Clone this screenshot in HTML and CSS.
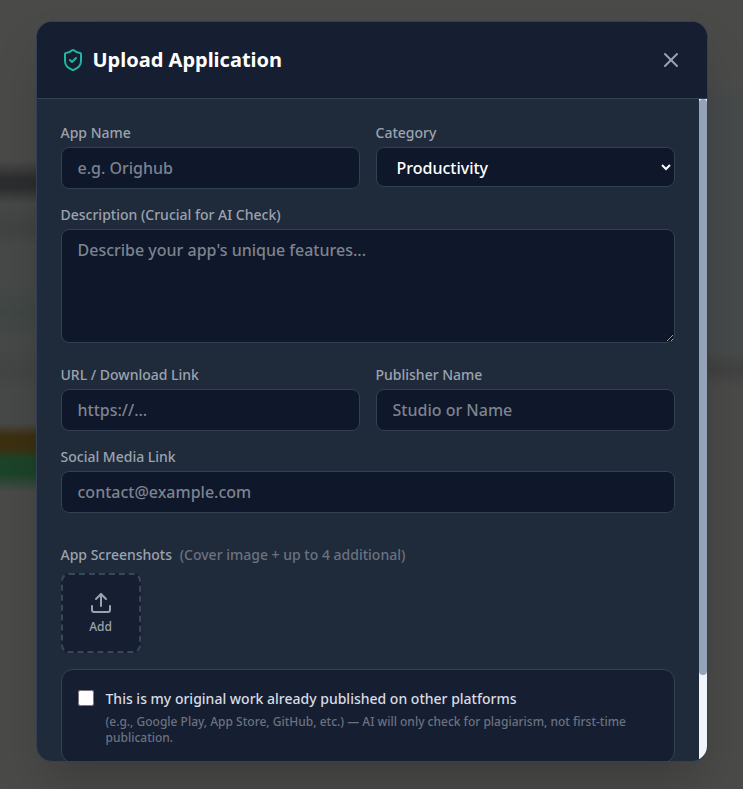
FILE: index.html
```html
<!DOCTYPE html>
<html lang="en">
<head>
  <meta charset="UTF-8" />
  <meta name="viewport" content="width=device-width, initial-scale=1.0"/>
  <title>Upload Application</title>
  <link rel="stylesheet" href="styles.css">
</head>
<body>

  <div class="overlay">
    <div class="modal" role="dialog" aria-labelledby="modal-title">

      <!-- Header -->
      <div class="modal-header">
        <h2 id="modal-title">
          <svg class="shield" viewBox="0 0 24 24" fill="none" stroke="currentColor" stroke-width="2" stroke-linecap="round" stroke-linejoin="round">
            <path d="M20 13c0 5-3.5 7.5-7.66 8.95a1 1 0 0 1-.67-.01C7.5 20.5 4 18 4 13V6a1 1 0 0 1 1-1c2 0 4.5-1.2 6.24-2.72a1.17 1.17 0 0 1 1.52 0C14.51 3.81 17 5 19 5a1 1 0 0 1 1 1z"/>
            <path d="m9 12 2 2 4-4"/>
          </svg>
          Upload Application
        </h2>
        <button type="button" class="close-btn" aria-label="Close">
          <svg viewBox="0 0 24 24" fill="none" stroke="currentColor" stroke-width="2" stroke-linecap="round" stroke-linejoin="round">
            <path d="M18 6 6 18"/>
            <path d="m6 6 12 12"/>
          </svg>
        </button>
      </div>

      <!-- Form -->
      <div class="modal-body">
        <form class="upload-form" novalidate>
          <div class="form-row">
            <div class="form-group">
              <label for="app-name">App Name</label>
              <input type="text" id="app-name" placeholder="e.g. Orighub">
            </div>
            <div class="form-group">
              <label for="category">Category</label>
              <select id="category">
                <option>Productivity</option>
              </select>
            </div>
          </div>

          <div class="form-group">
            <label for="description">Description (Crucial for AI Check)</label>
            <textarea id="description" rows="4" placeholder="Describe your app's unique features..."></textarea>
          </div>

          <div class="form-row">
            <div class="form-group">
              <label for="app-url">URL / Download Link</label>
              <input type="url" id="app-url" placeholder="https://...">
            </div>
            <div class="form-group">
              <label for="publisher">Publisher Name</label>
              <input type="text" id="publisher" placeholder="Studio or Name">
            </div>
          </div>

          <div class="form-group">
            <label for="social">Social Media Link</label>
            <input type="text" id="social" placeholder="contact@example.com">
          </div>

          <div class="screenshots">
            <p class="screenshots-label">App Screenshots <span>(Cover image + up to 4 additional)</span></p>
            <button type="button" class="add-btn">
              <svg viewBox="0 0 24 24" fill="none" stroke="currentColor" stroke-width="2" stroke-linecap="round" stroke-linejoin="round">
                <path d="M21 15v4a2 2 0 0 1-2 2H5a2 2 0 0 1-2-2v-4"/>
                <path d="m17 8-5-5-5 5"/>
                <path d="M12 3v12"/>
              </svg>
              Add
            </button>
          </div>

          <div class="original-card">
            <input type="checkbox" id="original">
            <label for="original">
              This is my original work already published on other platforms
              <small>(e.g., Google Play, App Store, GitHub, etc.) — AI will only check for plagiarism, not first-time publication.</small>
            </label>
          </div>
        </form>
        <div class="scrollbar" aria-hidden="true">
          <div class="scrollbar-thumb"></div>
        </div>
      </div>

    </div>
  </div>

</body>
</html>
```
FILE: styles.css
```css
* {
  box-sizing: border-box;
  margin: 0;
  padding: 0;
}

body {
  font-family: 'Segoe UI', 'Noto Sans', sans-serif;
  font-weight: 500;
  color: #fff;
  background: #4a4b49;
}

/* Dimmed page behind the dialog */
.overlay {
  display: flex;
  justify-content: center;
  align-items: flex-start;
  height: 100vh;
  padding: 21px 16px 27px;
  background:
    linear-gradient(to bottom, #4a4b49 160px, #2c2d2e 179px, #2c2d2e 187px, #474948 204px, #414343 230px, #474948 246px, #474948 285px, #3f4745 312px, #474948 345px, #424543 372px, #474948 390px, #474948 423px, #3d3011 436px, #3d3011 448px, #1c4429 460px, #1c4429 474px, #4a4a49 492px) left / 50% 100% no-repeat,
    linear-gradient(to bottom, #4a4b49 80px, #474a4a 100px, #474a4a 352px, #404140 370px, #4a4a49 388px);
}

/* Modal */
.modal {
  display: flex;
  flex-direction: column;
  width: 100%;
  max-width: 672px;
  max-height: 100%;
  overflow: hidden;
  background: #1f2a3b;
  border: 1px solid #334155;
  border-radius: 16px;
  box-shadow: 0 25px 50px -12px rgba(0, 0, 0, 0.25);
}

.modal-header {
  display: flex;
  flex: none;
  justify-content: space-between;
  align-items: center;
  padding: 24px;
  background: #161e31;
  border-bottom: 1px solid #334155;
}

.modal-header h2 {
  display: flex;
  align-items: center;
  gap: 8px;
  font-size: 20px;
  line-height: 28px;
  font-weight: 700;
}

.modal-header svg {
  display: block;
  width: 24px;
  height: 24px;
}

.shield {
  color: #22b5a0;
}

.close-btn {
  background: none;
  border: none;
  color: #9ca3af;
  cursor: pointer;
}

/* Form */
.modal-body {
  display: flex;
  min-height: 0;
}

.upload-form {
  display: flex;
  flex: 1;
  flex-direction: column;
  gap: 16px;
  padding: 24px 24px 94px;
  overflow-y: auto;
  scrollbar-width: none;
}

.scrollbar {
  flex: none;
  width: 8px;
  background: #f1f5f9;
}

.scrollbar-thumb {
  height: 87%;
  background: #94a3b8;
  border-radius: 4px;
}

.form-row {
  display: grid;
  grid-template-columns: 1fr 1fr;
  align-items: start;
  gap: 16px;
}

.form-group label,
.screenshots-label {
  display: block;
  margin-bottom: 4px;
  font-size: 14px;
  line-height: 20px;
  color: #9ca3af;
}

.form-group input,
.form-group select,
.form-group textarea {
  display: block;
  width: 100%;
  padding: 8px 16px;
  border: 1px solid #334155;
  border-radius: 8px;
  background: #0f172a;
  color: #fff;
  font-family: inherit;
  font-size: 16px;
  font-weight: 500;
  line-height: 24px;
}

.form-group select {
  height: 40px;
}

.form-group textarea {
  margin-bottom: 6px;
  resize: vertical;
}

.form-group ::placeholder {
  color: #7d838f;
  opacity: 1;
}

/* Screenshots */
.screenshots {
  padding-top: 16px;
}

.screenshots-label {
  margin-bottom: 8px;
}

.screenshots-label span {
  margin-left: 4px;
  color: #6b7280;
}

.add-btn {
  display: flex;
  flex-direction: column;
  align-items: center;
  justify-content: center;
  gap: 4px;
  width: 80px;
  height: 80px;
  background: #161e31;
  border: 2px dashed #3a475a;
  border-radius: 8px;
  color: #9ca3af;
  font-family: inherit;
  font-size: 12px;
  font-weight: 500;
  line-height: 16px;
  cursor: pointer;
}

.add-btn svg {
  width: 24px;
  height: 24px;
}

/* Original work */
.original-card {
  display: flex;
  align-items: flex-start;
  gap: 12px;
  padding: 16px;
  background: #161e31;
  border: 1px solid #334155;
  border-radius: 12px;
}

.original-card input {
  flex: none;
  width: 16px;
  height: 16px;
  margin-top: 4px;
}

.original-card label {
  font-size: 14px;
  line-height: 26px;
  color: #d8dce3;
}

.original-card small {
  display: block;
  margin-top: 2px;
  font-size: 12px;
  line-height: 16px;
  color: #6b7280;
}
```
